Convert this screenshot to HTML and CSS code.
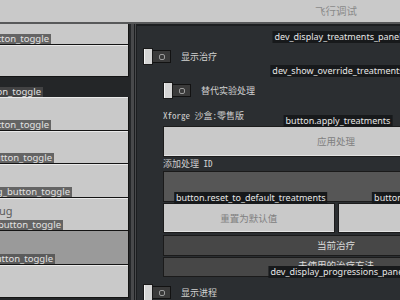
FILE: index.html
```html
<!DOCTYPE html>
<html lang="zh">
<head>
<meta charset="utf-8">
<title>飞行调试</title>
<link rel="stylesheet" href="styles.css">
</head>
<body>
<div class="app">
  <div class="titlebar">
    <div class="tb-left"></div>
    <div class="tb-title">飞行调试</div>
  </div>
  <div class="main">
    <div class="side">
      <div class="sbtn first"><span class="sl r77">show_button_toggle</span></div>
      <div class="sbtn second"></div>
      <div class="sgap"><span class="sl r85">menu_button_toggle</span></div>
      <div class="sbtn"><span class="sl r77">map_button_toggle</span></div>
      <div class="sbtn"><span class="sl r74">log_button_toggle</span></div>
      <div class="sbtn"><span class="sl r56">debug_button_toggle</span></div>
      <div class="sbtn"><span class="btxt">ug</span><span class="sl r65">flight_button_toggle</span></div>
      <div class="sbtn sel"><span class="sl r73">test_button_toggle</span></div>
      <div class="sbtn"></div>
    </div>
    <div class="sep"></div>
    <div class="panel">
      <div class="trow">
        <span class="dl">dev_display_treatments_panel</span>
        <span class="knob"></span><span class="track"><span class="ring"></span></span>
        <span class="tlabel">显示治疗</span>
      </div>
      <div class="group">
        <div class="trow">
          <span class="dl">dev_show_override_treatments</span>
          <span class="knob"></span><span class="track"><span class="ring"></span></span>
          <span class="tlabel">替代实验处理</span>
        </div>
        <div class="note">Xforge 沙盒:零售版</div>
        <div class="lbtn apply"><span class="dl">button.apply_treatments</span>应用处理</div>
        <div class="note field">添加处理 ID</div>
        <div class="input"></div>
        <div class="brow">
          <div class="lbtn"><span class="dl">button.reset_to_default_treatments</span>重置为默认值</div>
          <div class="lbtn"><span class="dl">button.clear_treatments</span></div>
        </div>
        <div class="bar b1">当前治疗</div>
        <div class="bar b2">未使用的治疗方法</div>
      </div>
      <div class="trow last">
        <span class="dl">dev_display_progressions_panel</span>
        <span class="knob"></span><span class="track"><span class="ring"></span></span>
        <span class="tlabel">显示进程</span>
      </div>
    </div>
  </div>
</div>
</body>
</html>
```
FILE: styles.css
```css
* { box-sizing: border-box; margin: 0; padding: 0; }
html, body { width: 400px; height: 300px; overflow: hidden; background: #242628; }
body { font-family: "Noto Sans", "Noto Sans CJK SC", sans-serif; }

.app { width: 536px; height: 300px; display: flex; flex-direction: column; }

.titlebar { height: 24px; flex: none; background: #c9c9c9; border-bottom: 2px solid #58595a; display: flex; }
.tb-left { width: 136px; }
.tb-title { width: 400px; text-align: center; font: 10.5px/22px "Noto Sans CJK SC", sans-serif; color: #8a8a8a; }

.main { flex: 1; display: flex; min-height: 0; }

.side { width: 131px; flex: none; background: #242628; overflow: hidden; display: flex; flex-direction: column; }
.sbtn { position: relative; width: 129px; height: 33.5px; flex: none; background: #c9c9c9; border-right: 1px solid #141414; border-bottom: 1px solid #141414; box-shadow: inset 0 1px 0 #e9e9e9; }
.sbtn.first { height: 21px; box-shadow: none; }
.sbtn.second { height: 32px; }
.sbtn.sel { background: #9a9a9a; box-shadow: none; }
.sgap { position: relative; width: 128px; height: 20px; flex: none; }
.btxt { display: block; padding-top: 6px; margin-left: -1px; font: 11px/13px "Noto Sans", sans-serif; color: #5a5a5a; }
.sl { position: absolute; bottom: 0; background: rgba(75, 75, 75, 0.8); color: #e2e2e2; font: 9.5px/10px "Noto Sans", sans-serif; padding: 0 2px; white-space: nowrap; }
.r77 { right: 77px; }
.r85 { right: 85px; }
.r74 { right: 74px; }
.r56 { right: 56px; }
.r65 { right: 65px; }
.r73 { right: 73px; }

.sep { width: 4px; flex: none; background: #48494b; border-right: 1px solid #1c1e20; }

.panel { width: 401px; flex: none; background: #2b2e31; border-left: 1px solid #48494b; box-shadow: inset 1px 2px 0 #1c1e20; padding: 19px 7px 0 7px; display: flex; flex-direction: column; }

.trow { position: relative; display: flex; align-items: center; padding-top: 5px; height: 22px; flex: none; }
.trow.last { margin-top: 1px; padding-top: 6px; height: 23px; }
.knob { width: 10px; height: 17px; background: #d5d5d5; border: 1px solid #1a1a1a; box-shadow: inset 1px 0 0 #f4f4f4; }
.track { width: 18px; height: 13px; background: #3a3a3a; border: 1px solid #121212; border-left: none; display: flex; align-items: center; justify-content: center; }
.ring { width: 6px; height: 6px; border: 1px solid #9c9c9c; border-radius: 2px; }
.tlabel { margin-left: 10px; font: 9px/12px "Noto Sans CJK SC", sans-serif; color: #d2d2d2; }

.group { margin: 12px 20px 0; display: flex; flex-direction: column; }
.note { margin-top: 11px; font: 9px/12px "Noto Sans Mono CJK SC", "Noto Sans CJK SC", monospace; color: #cfcfcf; white-space: nowrap; }
.note.field { margin-top: 1px; }

.lbtn { position: relative; height: 31px; background: #c9c9c9; border: 1px solid #1c1c1c; color: #808080; font: 9.5px/29px "Noto Sans CJK SC", sans-serif; text-align: center; box-shadow: inset 0 -1px 0 #e4e4e4; }
.lbtn.apply { margin-top: 4px; }
.input { margin-top: 1px; height: 31px; background: #565656; border: 1px solid #1a1a1a; }
.brow { margin-top: 1px; display: flex; gap: 3px; }
.brow .lbtn { flex: 1; height: 30px; line-height: 28px; }

.bar { background: #474747; border: 1px solid #1b1b1b; color: #dcdcdc; font: 9.5px/19px "Noto Sans CJK SC", sans-serif; text-align: center; }
.bar.b1 { margin-top: 2px; height: 21px; }
.bar.b2 { margin-top: 1px; height: 20px; line-height: 15px; }

.dl { position: absolute; bottom: 100%; left: calc(50% + 2px); transform: translateX(-50%); background: #17191b; color: #e6e6e6; font: 9px/12px "Noto Sans", sans-serif; padding: 0 2px; white-space: nowrap; z-index: 2; }
```
